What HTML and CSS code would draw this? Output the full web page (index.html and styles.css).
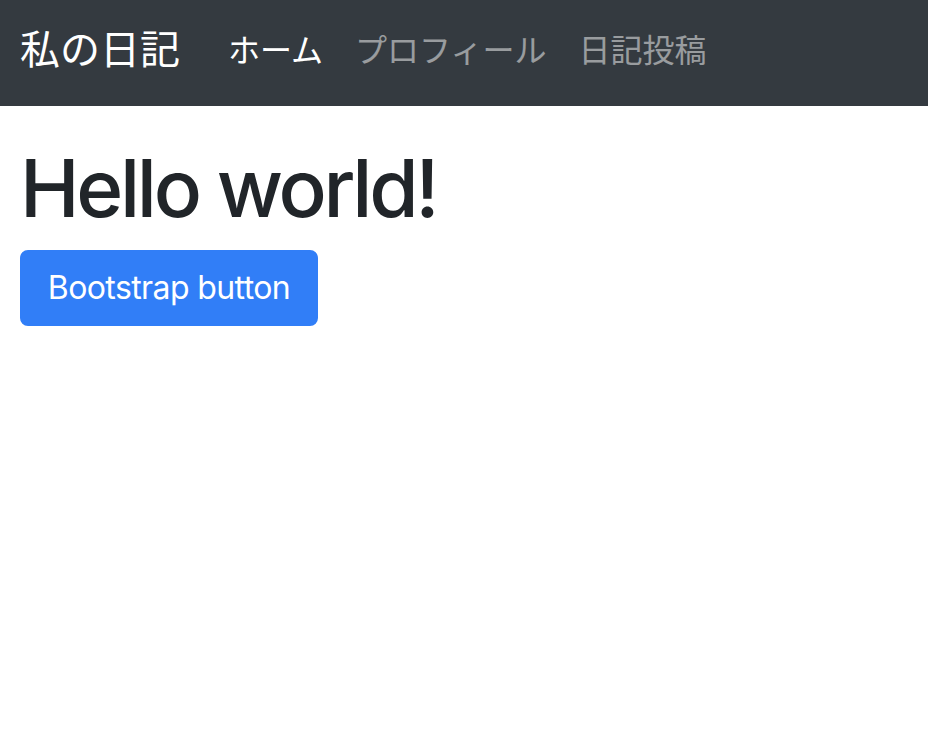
FILE: index.html
```html
<!DOCTYPE html>
<html lang="ja">
<head>
<meta charset="utf-8">
<title>私の日記</title>
<link rel="stylesheet" href="styles.css">
</head>
<body>
<nav class="navbar">
  <a class="brand" href="#">私の日記</a>
  <ul class="nav">
    <li><a class="nav-link active" href="#">ホーム</a></li>
    <li><a class="nav-link" href="#">プロフィール</a></li>
    <li><a class="nav-link" href="#">日記投稿</a></li>
  </ul>
</nav>
<main class="container">
  <h1 class="title">Hello world!</h1>
  <button class="btn" type="button">Bootstrap button</button>
</main>
</body>
</html>
```
FILE: styles.css
```css
* { box-sizing: border-box; }
body {
  margin: 0;
  font-family: Inter, "Noto Sans CJK JP", sans-serif;
  color: #212529;
  background: #fff;
}
.navbar {
  height: 106px;
  background: #343a40;
  display: flex;
  align-items: center;
  padding: 0 20px;
}
.brand {
  font-size: 40px;
  line-height: 60px;
  color: #fff;
  text-decoration: none;
  margin-right: 32px;
  margin-top: -6px;
}
.nav {
  display: flex;
  list-style: none;
  margin: 0;
  padding: 0;
  margin-top: -4px;
}
.nav-link {
  display: block;
  font-size: 32px;
  line-height: 48px;
  padding: 0 16px;
  color: rgba(255, 255, 255, 0.5);
  text-decoration: none;
}
.nav-link.active { color: #fff; }
.container { padding: 0 20px; }
.title {
  font-size: 80px;
  font-weight: 500;
  line-height: 96px;
  letter-spacing: -3.3px;
  margin: 34px 0 14px;
}
.btn {
  font-family: inherit;
  font-size: 32px;
  line-height: 48px;
  padding: 12px 0;
  letter-spacing: -0.6px;
  white-space: nowrap;
  text-align: center;
  border: 2px solid #317ef7;
  border-radius: 8px;
  background: #317ef7;
  color: #fff;
  width: 298px;
}
```
